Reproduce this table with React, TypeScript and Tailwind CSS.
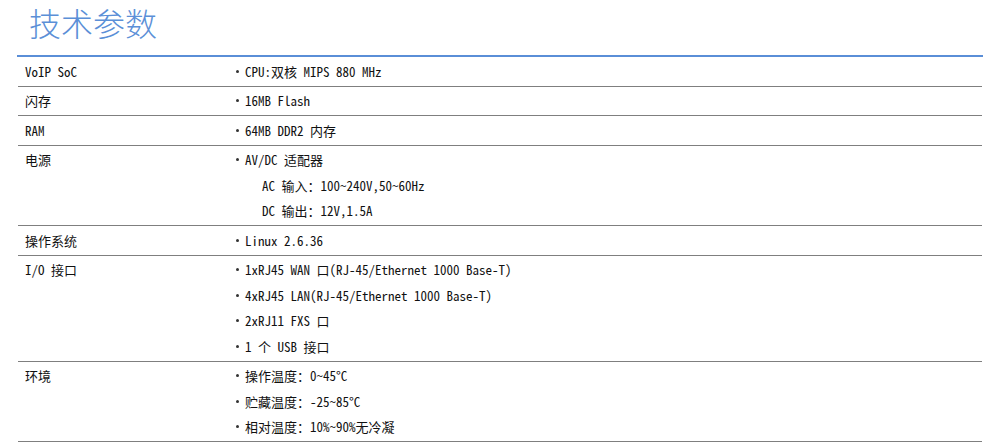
import React from "react";

type Row = { label: string; lines: { text: string; bullet: boolean }[] };

const rows: Row[] = [
  { label: "VoIP SoC", lines: [{ text: "CPU:双核 MIPS 880 MHz", bullet: true }] },
  { label: "闪存", lines: [{ text: "16MB Flash", bullet: true }] },
  { label: "RAM", lines: [{ text: "64MB DDR2 内存", bullet: true }] },
  {
    label: "电源",
    lines: [
      { text: "AV/DC 适配器", bullet: true },
      { text: "AC 输入：100~240V,50~60Hz", bullet: false },
      { text: "DC 输出：12V,1.5A", bullet: false },
    ],
  },
  { label: "操作系统", lines: [{ text: "Linux 2.6.36", bullet: true }] },
  {
    label: "I/O 接口",
    lines: [
      { text: "1xRJ45 WAN 口(RJ-45/Ethernet 1000 Base-T)", bullet: true },
      { text: "4xRJ45 LAN(RJ-45/Ethernet 1000 Base-T)", bullet: true },
      { text: "2xRJ11 FXS 口", bullet: true },
      { text: "1 个 USB 接口", bullet: true },
    ],
  },
  {
    label: "环境",
    lines: [
      { text: "操作温度：0~45°C", bullet: true },
      { text: "贮藏温度：-25~85°C", bullet: true },
      { text: "相对温度：10%~90%无冷凝", bullet: true },
    ],
  },
];

export default function App() {
  return (
    <div className="w-[1000px] h-[445px] bg-white overflow-hidden">
      <div className="h-[55px] pl-[29px] pt-[1px]">
        <h1
          className="text-[32px] leading-[42px] text-[#5b8fd7] font-light"
          style={{ fontFamily: '"Noto Sans CJK SC", sans-serif' }}
        >
          技术参数
        </h1>
      </div>
      <div className="mx-[17px] h-[2px] bg-[#5a8ed7]" />
      <div
        className="mx-[18px] text-[13px] text-[#111]"
        style={{ fontFamily: '"Noto Sans Mono CJK SC", "Noto Sans CJK SC", monospace' }}
      >
        {rows.map((r) => (
          <div key={r.label} className="flex border-b border-[#7f7f7f] py-[1.5px]">
            <div className="w-[212px] pl-[7px] leading-[25.5px]">{r.label}</div>
            <div className="flex flex-col">
              {r.lines.map((l) => (
                <div key={l.text} className="flex items-center leading-[25.5px] whitespace-pre">
                  {l.bullet ? (
                    <span className="w-[15px] flex pl-[6px]">
                      <span className="w-[3px] h-[3px] rounded-full bg-[#333]" />
                    </span>
                  ) : (
                    <span className="w-[32px]" />
                  )}
                  <span>{l.text}</span>
                </div>
              ))}
            </div>
          </div>
        ))}
      </div>
    </div>
  );
}
